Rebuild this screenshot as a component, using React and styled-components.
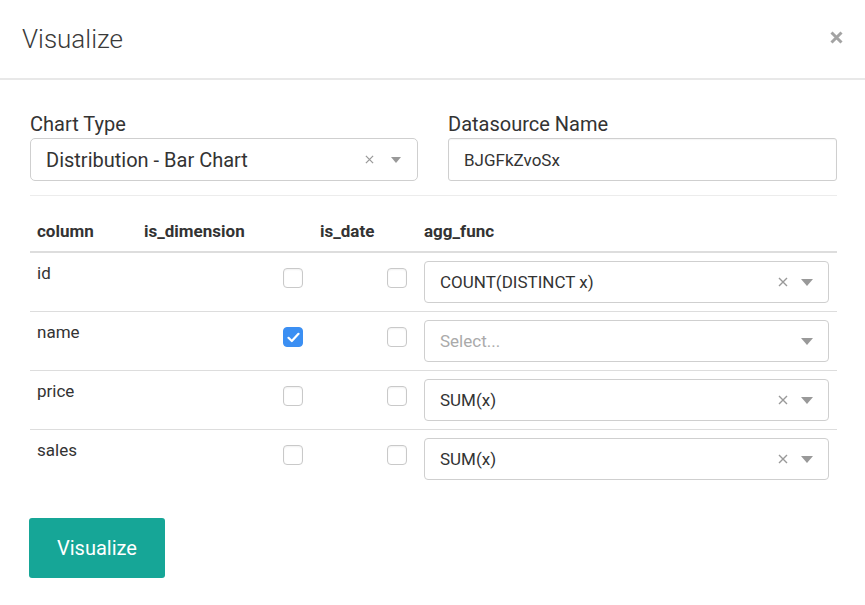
import React from "react";
import styled, { createGlobalStyle } from "styled-components";

const Global = createGlobalStyle`
  html, body { margin: 0; padding: 0; background: #fff; }
  body { font-family: Roboto, "Liberation Sans", Arial, sans-serif; color: #333; }
  * { box-sizing: border-box; }
`;

const Modal = styled.div`
  width: 865px;
  height: 605px;
  background: #fff;
  display: flex;
  flex-direction: column;
`;

const Header = styled.div`
  height: 80px;
  padding: 0 22px;
  display: flex;
  align-items: center;
  justify-content: space-between;
  border-bottom: 2px solid #e8e8e8;
`;

const Title = styled.h4`
  margin: 0 0 1px 0;
  font-family: "Roboto Light", Roboto, "Liberation Sans", Arial, sans-serif;
  font-size: 26px;
  font-weight: 300;
  color: #3a3a3a;
  line-height: 1;
`;

const CloseButton = styled.button`
  border: 0;
  background: none;
  padding: 0;
  margin: 0 0 4px 0;
  width: 13px;
  height: 13px;
  display: flex;
  cursor: pointer;
`;

const Body = styled.div`
  padding: 32px 28px 0 30px;
  display: flex;
  flex-direction: column;
`;

const FormRow = styled.div`
  display: grid;
  grid-template-columns: 388px 389px;
  column-gap: 30px;
  padding-bottom: 14px;
  border-bottom: 1px solid #ececec;
`;

const Field = styled.div`
  display: flex;
  flex-direction: column;
`;

const Label = styled.label`
  font-size: 20px;
  line-height: 24px;
  color: #333;
  margin-bottom: 2px;
`;

const SelectBox = styled.div`
  height: ${(p) => p.$h}px;
  border: 1px solid #cfcfcf;
  border-radius: ${(p) => p.$r}px;
  display: flex;
  align-items: center;
  padding: 0 ${(p) => p.$pr}px 0 15px;
  font-size: ${(p) => p.$fs}px;
  color: #333;
  background: #fff;
`;

const SelectValue = styled.span`
  flex: 1;
  color: ${(p) => (p.$placeholder ? "#aaa" : "#333")};
  white-space: nowrap;
`;

const ClearX = styled.span`
  display: flex;
  width: 10px;
  height: 10px;
  margin-right: ${(p) => p.$gap}px;
`;

const Caret = styled.span`
  width: 0;
  height: 0;
  border-left: ${(p) => p.$w}px solid transparent;
  border-right: ${(p) => p.$w}px solid transparent;
  border-top: ${(p) => p.$w + 1}px solid #999;
  margin-top: 1px;
`;

const TextInput = styled.input`
  height: 43px;
  border: 1px solid #cfcfcf;
  border-radius: 3px;
  padding: 0 15px;
  font-family: Roboto, "Liberation Sans", Arial, sans-serif;
  font-size: 17px;
  color: #333;
  outline: none;
  box-shadow: inset 0 1px 1px rgba(0, 0, 0, 0.04);
`;

const Table = styled.table`
  margin-top: 15px;
  width: 807px;
  border-collapse: collapse;
  table-layout: fixed;
`;

const HeadCell = styled.th`
  text-align: left;
  font-size: 17px;
  font-weight: 700;
  line-height: 24px;
  color: #333;
  padding: 8px 8px 8px 7px;
  border-bottom: 2px solid #ddd;
  width: ${(p) => p.$w}px;
`;

const Row = styled.tr`
  border-bottom: ${(p) => (p.$last ? "0" : "1px solid #ddd")};
`;

const Cell = styled.td`
  vertical-align: top;
  padding: 8px 8px 8px 7px;
  font-size: 17px;
  line-height: 24px;
  color: #333;
  text-align: ${(p) => (p.$right ? "right" : "left")};
`;

const Check = styled.span`
  display: inline-flex;
  align-items: center;
  justify-content: center;
  width: 20px;
  height: 20px;
  margin: 7px 2px 0 0;
  border-radius: 4px;
  border: 1px solid ${(p) => (p.$on ? "#3b8ff3" : "#c9c9c9")};
  background: ${(p) => (p.$on ? "#3b8ff3" : "#fff")};
  box-shadow: ${(p) => (p.$on ? "none" : "inset 0 1px 2px rgba(0,0,0,0.06)")};
  vertical-align: top;
`;

const Footer = styled.div`
  padding-top: 30px;
  display: flex;
`;

const PrimaryButton = styled.button`
  height: 60px;
  padding: 0 28px;
  background: #16a697;
  color: #fff;
  border: 0;
  border-radius: 3px;
  font-family: Roboto, "Liberation Sans", Arial, sans-serif;
  font-size: 20px;
  font-weight: 400;
  margin-left: -1px;
  cursor: pointer;
`;

const XIcon = ({ size = 10, color = "#999", w = 1.4 }) => (
  <svg width={size} height={size} viewBox="0 0 10 10">
    <path d="M1 1 L9 9 M9 1 L1 9" stroke={color} strokeWidth={w} strokeLinecap="butt" />
  </svg>
);

const CheckIcon = () => (
  <svg width="13" height="11" viewBox="0 0 13 11">
    <path d="M1.5 5.8 L4.8 9 L11.5 1.8" fill="none" stroke="#fff" strokeWidth="2.2" strokeLinecap="round" strokeLinejoin="round" />
  </svg>
);

const Select = ({ value, placeholder, clearable, small }) => (
  <SelectBox $h={small ? 42 : 43} $r={small ? 4 : 5} $pr={small ? 15 : 16} $fs={small ? 17 : 20}>
    <SelectValue $placeholder={!value}>{value || placeholder}</SelectValue>
    {clearable && value ? (
      <ClearX $gap={small ? 13 : 16}>
        <XIcon size={small ? 10 : 9} />
      </ClearX>
    ) : null}
    <Caret $w={small ? 6 : 5} />
  </SelectBox>
);

const rows = [
  { name: "id", dim: false, date: false, agg: "COUNT(DISTINCT x)" },
  { name: "name", dim: true, date: false, agg: "" },
  { name: "price", dim: false, date: false, agg: "SUM(x)" },
  { name: "sales", dim: false, date: false, agg: "SUM(x)" },
];

export default function App() {
  return (
    <>
      <Global />
      <Modal>
        <Header>
          <Title>Visualize</Title>
          <CloseButton aria-label="Close">
            <svg width="13" height="13" viewBox="0 0 13 13">
              <path d="M1.5 1.5 L11.5 11.5 M11.5 1.5 L1.5 11.5" stroke="#a3a3a3" strokeWidth="3" />
            </svg>
          </CloseButton>
        </Header>
        <Body>
          <FormRow>
            <Field>
              <Label>Chart Type</Label>
              <Select value="Distribution - Bar Chart" clearable />
            </Field>
            <Field>
              <Label>Datasource Name</Label>
              <TextInput defaultValue="BJGFkZvoSx" />
            </Field>
          </FormRow>
          <Table>
            <thead>
              <tr>
                <HeadCell $w={107}>column</HeadCell>
                <HeadCell $w={176}>is_dimension</HeadCell>
                <HeadCell $w={104}>is_date</HeadCell>
                <HeadCell $w={420}>agg_func</HeadCell>
              </tr>
            </thead>
            <tbody>
              {rows.map((r, i) => (
                <Row key={r.name} $last={i === rows.length - 1}>
                  <Cell>{r.name}</Cell>
                  <Cell $right>
                    <Check $on={r.dim}>{r.dim ? <CheckIcon /> : null}</Check>
                  </Cell>
                  <Cell $right>
                    <Check $on={r.date}>{r.date ? <CheckIcon /> : null}</Check>
                  </Cell>
                  <Cell>
                    <Select small value={r.agg} placeholder="Select..." clearable />
                  </Cell>
                </Row>
              ))}
            </tbody>
          </Table>
          <Footer>
            <PrimaryButton>Visualize</PrimaryButton>
          </Footer>
        </Body>
      </Modal>
    </>
  );
}
